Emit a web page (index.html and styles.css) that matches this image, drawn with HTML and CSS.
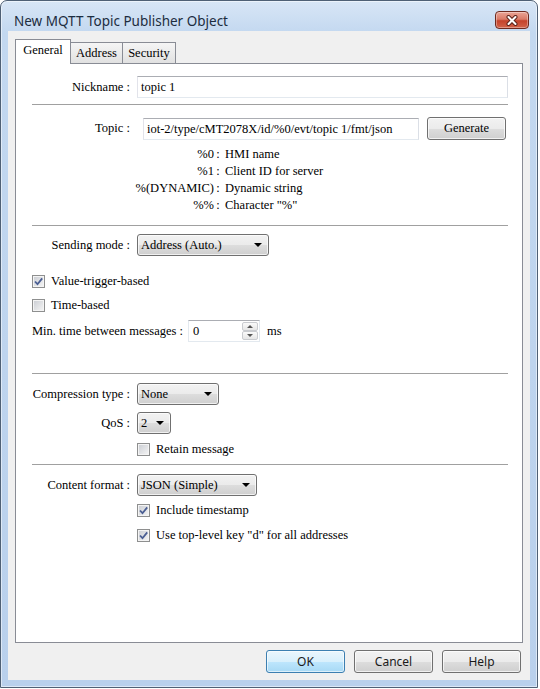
FILE: index.html
```html
<!DOCTYPE html>
<html lang="en">
<head>
    <meta charset="UTF-8">
    <meta name="viewport" content="width=device-width, initial-scale=1.0">
    <title>New MQTT Topic Publisher Object</title>
    <link rel="stylesheet" href="styles.css">
</head>
<body>
    <div class="window">
        <div class="titlebar">
            <span class="title">New MQTT Topic Publisher Object</span>
            <button class="close-btn" aria-label="Close">
                <svg width="14" height="11" viewBox="0 0 14 11">
                    <path d="M3.5 2 L10.5 9 M10.5 2 L3.5 9" stroke="#5b2219" stroke-width="4" stroke-linecap="round" fill="none"/>
                    <path d="M3.5 2 L10.5 9 M10.5 2 L3.5 9" stroke="#fff" stroke-width="2" stroke-linecap="round" fill="none"/>
                </svg>
            </button>
        </div>

        <div class="client">
            <!-- tab strip -->
            <div class="tabs">
                <div class="tab tab-general active">General</div>
                <div class="tab tab-address">Address</div>
                <div class="tab tab-security">Security</div>
            </div>

            <div class="pane">
                <div class="row row-nickname">
                    <span class="field-label">Nickname :</span>
                    <div class="textbox nickname">topic 1</div>
                </div>

                <div class="sep sep-topic"></div>

                <div class="row row-topic">
                    <span class="field-label">Topic :</span>
                    <div class="textbox topic">iot-2/type/cMT2078X/id/%0/evt/topic 1/fmt/json</div>
                    <button class="btn generate">Generate</button>
                </div>

                <div class="legend">
                    <span class="legend-key">%0</span><span class="legend-colon">:</span><span class="legend-val">HMI name</span>
                    <span class="legend-key">%1</span><span class="legend-colon">:</span><span class="legend-val">Client ID for server</span>
                    <span class="legend-key">%(DYNAMIC)</span><span class="legend-colon">:</span><span class="legend-val">Dynamic string</span>
                    <span class="legend-key">%%</span><span class="legend-colon">:</span><span class="legend-val">Character "%"</span>
                </div>

                <div class="sep sep-sending"></div>

                <div class="row row-sending">
                    <span class="field-label">Sending mode :</span>
                    <div class="select sel-sending">Address (Auto.)</div>
                </div>

                <div class="check-row cr-value">
                    <span class="checkbox checked">
                        <svg width="11" height="11" viewBox="0 0 11 11"><path d="M2 5.5 L4.5 8.2 L9.2 2.4" stroke="#4a5e93" stroke-width="1.8" fill="none"/></svg>
                    </span>
                    <span>Value-trigger-based</span>
                </div>
                <div class="check-row cr-time">
                    <span class="checkbox"></span>
                    <span>Time-based</span>
                </div>

                <div class="row row-min">
                    <span class="min-label">Min. time between messages :</span>
                    <div class="spinner">
                        <span>0</span>
                        <span class="spin-buttons">
                            <span class="spin-btn up"></span>
                            <span class="spin-btn down"></span>
                        </span>
                    </div>
                    <span class="unit">ms</span>
                </div>

                <div class="sep sep-compress"></div>

                <div class="row row-compress">
                    <span class="field-label">Compression type :</span>
                    <div class="select sel-compress">None</div>
                </div>
                <div class="row row-qos">
                    <span class="field-label">QoS :</span>
                    <div class="select sel-qos">2</div>
                </div>
                <div class="check-row cr-retain indent">
                    <span class="checkbox"></span>
                    <span>Retain message</span>
                </div>

                <div class="sep sep-format"></div>

                <div class="row row-format">
                    <span class="field-label">Content format :</span>
                    <div class="select sel-format">JSON (Simple)</div>
                </div>
                <div class="check-row cr-stamp indent">
                    <span class="checkbox checked">
                        <svg width="11" height="11" viewBox="0 0 11 11"><path d="M2 5.5 L4.5 8.2 L9.2 2.4" stroke="#4a5e93" stroke-width="1.8" fill="none"/></svg>
                    </span>
                    <span>Include timestamp</span>
                </div>
                <div class="check-row cr-key indent">
                    <span class="checkbox checked">
                        <svg width="11" height="11" viewBox="0 0 11 11"><path d="M2 5.5 L4.5 8.2 L9.2 2.4" stroke="#4a5e93" stroke-width="1.8" fill="none"/></svg>
                    </span>
                    <span>Use top-level key "d" for all addresses</span>
                </div>
            </div>

            <div class="dialog-buttons">
                <button class="dlg-btn default">OK</button>
                <button class="dlg-btn">Cancel</button>
                <button class="dlg-btn">Help</button>
            </div>
        </div>
    </div>
</body>
</html>
```

FILE: styles.css
```css
* {
    margin: 0;
    padding: 0;
    box-sizing: border-box;
}

body {
    background: #fff;
    font-family: "Liberation Serif", "Times New Roman", serif;
    font-size: 12.5px;
    color: #000;
}

/* window frame */
.window {
    width: 538px;
    height: 688px;
    display: flex;
    flex-direction: column;
    padding: 0 7px 7px;
    border: 1px solid #4f6075;
    border-radius: 7px 7px 0 0;
    background: linear-gradient(180deg, #d8e6f6 0%, #c3d8f0 32px, #b9d0ec 100%);
    box-shadow: inset 0 0 0 1px rgba(255, 255, 255, 0.5);
}

.titlebar {
    height: 30px;
    flex-shrink: 0;
    display: flex;
    justify-content: space-between;
    align-items: flex-start;
    padding-left: 6px;
}

.title {
    margin-top: 10px;
    font-family: "Noto Sans", "Open Sans", sans-serif;
    font-size: 13.5px;
    line-height: 20px;
    color: #1c2c40;
}

.close-btn {
    width: 34px;
    height: 18px;
    margin-top: 10px;
    margin-right: 1px;
    display: flex;
    align-items: center;
    justify-content: center;
    border: 1px solid #6e2a1f;
    border-radius: 4px;
    background: linear-gradient(180deg, #eaa596 0%, #d97a67 45%, #c5432b 55%, #d2634a 100%);
    box-shadow: inset 0 0 0 1px rgba(255, 255, 255, 0.35);
}

.client {
    flex: 1;
    display: flex;
    flex-direction: column;
    padding: 8px 7px 0;
    background: #f0f0f0;
}

/* tabs */
.tabs {
    height: 24px;
    display: flex;
    align-items: flex-end;
}

.tab {
    height: 21px;
    margin-left: -1px;
    border: 1px solid #898c95;
    border-bottom: none;
    background: linear-gradient(180deg, #f5f5f5 0%, #e1e1e1 100%);
    line-height: 20px;
    text-align: center;
}

.tab.active {
    position: relative;
    z-index: 1;
    height: 25px;
    margin-bottom: -1px;
    background: #fff;
    line-height: 21px;
}

.tab-general { width: 56px; margin-left: 0; }
.tab-address { width: 53px; }
.tab-security { width: 54px; }

.pane {
    height: 580px;
    flex-shrink: 0;
    padding-top: 11px;
    border: 1px solid #898c95;
    background: #fff;
}

/* rows */
.row {
    display: flex;
    align-items: center;
}

.field-label {
    width: 114px;
    flex-shrink: 0;
    margin-right: 7px;
    text-align: right;
    white-space: nowrap;
}

.textbox {
    height: 22px;
    padding: 0 3px;
    border: 1px solid #e3e9ef;
    border-top-color: #abadb3;
    border-left-color: #e2e3ea;
    border-right-color: #dbdfe6;
    background: #fff;
    line-height: 20px;
    white-space: nowrap;
    overflow: hidden;
}

.nickname { width: 371px; }
.topic { width: 276px; margin-left: 6px; padding-left: 3px; }

.btn,
.select,
.dlg-btn {
    border: 1px solid #707070;
    border-radius: 3px;
    background: linear-gradient(180deg, #f2f2f2 0%, #ebebeb 50%, #dddddd 51%, #cfcfcf 100%);
    box-shadow: inset 0 0 0 1px rgba(255, 255, 255, 0.7);
    color: #000;
}

.btn {
    height: 23px;
    font: inherit;
}

.generate {
    width: 79px;
    margin-left: 8px;
}

.select {
    height: 22px;
    display: flex;
    align-items: center;
    justify-content: space-between;
    padding: 0 6px 0 3px;
    white-space: nowrap;
}

.select::after {
    content: "";
    border-left: 4px solid transparent;
    border-right: 4px solid transparent;
    border-top: 4px solid #000;
}

.sel-sending { width: 132px; }
.sel-compress { width: 82px; }
.sel-qos { width: 34px; }
.sel-format { width: 120px; }

.sep {
    height: 1px;
    margin: 0 14px 0 16px;
    background: #a0a0a0;
}

/* variable legend */
.legend {
    display: grid;
    grid-template-columns: 198px 8px 1fr;
    margin-top: 6px;
    line-height: 17px;
}

.legend-key { text-align: right; }
.legend-colon { text-align: center; }
.legend-val { padding-left: 3px; }

/* check boxes */
.check-row {
    height: 16px;
    display: flex;
    align-items: center;
    padding-left: 16px;
}

.check-row.indent { padding-left: 121px; }

.checkbox {
    width: 13px;
    height: 13px;
    margin-right: 6px;
    display: flex;
    align-items: center;
    justify-content: center;
    border: 1px solid #8e8f8f;
    background: linear-gradient(135deg, #c9ccd2 0%, #f6f6f6 100%);
    box-shadow: inset 0 0 0 1px #f4f4f4;
}

/* spinner */
.min-label {
    width: 150px;
    margin-left: 16px;
    margin-right: 6px;
    white-space: nowrap;
}

.spinner {
    width: 72px;
    height: 22px;
    display: flex;
    align-items: center;
    justify-content: space-between;
    padding: 0 1px 0 4px;
    border: 1px solid #e3e9ef;
    border-top-color: #abadb3;
    background: #fff;
}

.spin-buttons {
    width: 16px;
    height: 18px;
    display: flex;
    flex-direction: column;
}

.spin-btn {
    flex: 1;
    display: flex;
    align-items: center;
    justify-content: center;
    border: 1px solid #c9cbcf;
    border-radius: 2px;
    background: linear-gradient(180deg, #fafafa, #e6e6e6);
}

.spin-btn.up::after {
    content: "";
    border-left: 3px solid transparent;
    border-right: 3px solid transparent;
    border-bottom: 3px solid #555;
}

.spin-btn.down::after {
    content: "";
    border-left: 3px solid transparent;
    border-right: 3px solid transparent;
    border-top: 3px solid #555;
}

.unit { margin-left: 7px; }

/* vertical rhythm of the General page */
.row-nickname { margin-top: 1px; }
.sep-topic { margin-top: 6px; }
.row-topic { margin-top: 12px; }
.sep-sending { margin-top: 11px; }
.row-sending { margin-top: 8px; }
.cr-value { margin-top: 17px; }
.cr-time { margin-top: 8px; }
.row-min { margin-top: 7px; }
.sep-compress { margin-top: 31px; }
.row-compress { margin-top: 9px; }
.row-qos { margin-top: 7px; }
.cr-retain { margin-top: 7px; }
.sep-format { margin-top: 7px; }
.row-format { margin-top: 9px; }
.cr-stamp { margin-top: 6px; }
.cr-key { margin-top: 9px; }

/* OK / Cancel / Help */
.dialog-buttons {
    display: flex;
    justify-content: flex-end;
    gap: 9px;
    margin-top: 7px;
    padding-right: 2px;
}

.dlg-btn {
    width: 79px;
    height: 23px;
    font-family: "Noto Sans", "Open Sans", sans-serif;
    font-size: 12px;
    color: #1a1a1a;
}

.dlg-btn.default {
    border-color: #3c7fb1;
    background: linear-gradient(180deg, #eaf6fd 0%, #d9f0fc 50%, #bee6fd 51%, #a7d9f5 100%);
    box-shadow: inset 0 0 0 1px rgba(255, 255, 255, 0.6);
}
```
